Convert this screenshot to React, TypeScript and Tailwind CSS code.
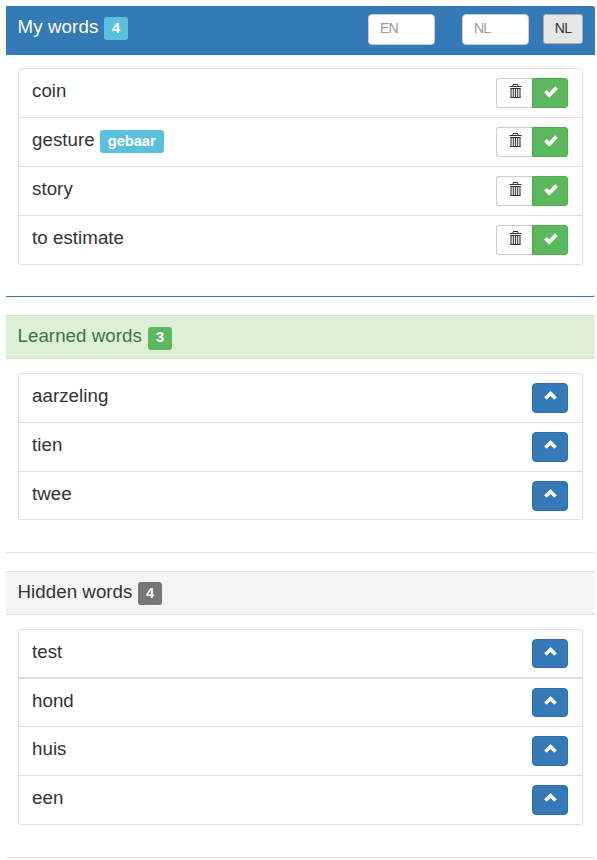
import React from "react";

const FONT = "font-['Liberation_Sans',Arial,sans-serif]";

function TrashIcon() {
  return (
    <svg width="13" height="14" viewBox="0 0 13 14" className="block shrink-0" fill="#333">
      <path d="M4 0h5v1H4zM3.5 1h1v1h-1zM8.5 1h1v1h-1zM.5 2h12v1H.5z" />
      <path d="M1.5 4h10v10h-10z" fill="#e4e6f2" />
      <path d="M1.5 4h10v1h-10zM1.5 13h10v1h-10z" />
      <path d="M1.5 4h1v10h-1zM10.5 4h1v10h-1z" />
      <path d="M3.9 5h.9v8h-.9zM6.05 5h.9v8h-.9zM8.2 5h.9v8h-.9z" />
    </svg>
  );
}

function CheckIcon() {
  return (
    <svg width="14" height="12" viewBox="0 0 14 12" className="block shrink-0" fill="#fff">
      <path d="M11.2.6 13.6 3 5.2 11.4.5 6.6 2.7 4.3l2.5 2.4z" stroke="#fff" strokeWidth=".6" strokeLinejoin="round" />
    </svg>
  );
}

function ChevronUpIcon() {
  return (
    <svg width="13" height="9" viewBox="0 0 13 9" className="block shrink-0" fill="#fff">
      <path d="M6.5.1 12.8 6.2 10.3 8.8 6.5 5.1 2.7 8.8.2 6.2z" />
    </svg>
  );
}

function Badge({ color, children }: { color: string; children: React.ReactNode }) {
  return (
    <span
      className={`flex h-[23px] min-w-6 items-center justify-center rounded-[3px] px-2 text-[14.6px] font-bold leading-none text-white ${color}`}
    >
      {children}
    </span>
  );
}

function WordRow({
  word,
  hint,
  learning,
  height = "h-[49px]",
  buttonHeight = "h-[30px]",
}: {
  word: string;
  hint?: string;
  learning?: boolean;
  height?: string;
  buttonHeight?: string;
}) {
  return (
    <li className={`flex shrink-0 items-start justify-between border-b border-[#ddd] pl-[13px] pr-[14px] pt-[9px] last:rounded-b last:border-b-0 ${height}`}>
      <div className="flex gap-[5px]">
        <span className="pt-[3px] text-[18.7px] leading-5 tracking-[0.06px]">{word}</span>
        {hint && (
          <div className="pt-[3px]">
            <Badge color="bg-[#5bc0de]">{hint}</Badge>
          </div>
        )}
      </div>
      {learning ? (
        <div className="flex">
          <button className="flex h-[30px] w-[36px] justify-center rounded-l-[3px] border border-r-0 border-[#ccc] bg-white pl-[2px] pt-[5px]">
            <TrashIcon />
          </button>
          <button className="flex h-[30px] w-[36px] justify-center rounded-r-[3px] border border-[#4cae4c] bg-[#5cb85c] pl-px pt-[7px]">
            <CheckIcon />
          </button>
        </div>
      ) : (
        <button className={`flex w-[36px] justify-center rounded-[4px] border border-[#2e6da4] bg-[#337ab7] pt-[7px] ${buttonHeight}`}>
          <ChevronUpIcon />
        </button>
      )}
    </li>
  );
}

function WordList({ children }: { children: React.ReactNode }) {
  return <ul className="ml-3 mr-3 flex flex-col rounded-[3px] border border-[#ddd]">{children}</ul>;
}

export default function App() {
  return (
    <main className={`h-[860px] w-[597px] overflow-hidden bg-white pl-[6px] pr-[2px] pt-[6px] text-[#333] ${FONT}`}>
      <section className="h-[291px] rounded-r-[2px] border-b border-[#337ab7]">
        <header className="flex h-[49px] items-start rounded-tr-[2px] bg-[#337ab7] pl-[11.5px] pr-[12px] text-white">
          <h2 className="w-[86.5px] whitespace-nowrap pt-[11px] text-[18.7px] leading-5 tracking-[0.12px]">My words</h2>
          <div className="mt-[11px]">
            <Badge color="bg-[#5bc0de]">4</Badge>
          </div>
          <div className="ml-auto mt-2 flex">
            <input
              placeholder="EN"
              className="h-[31px] w-[67px] rounded-[4px] border border-[#ccc] bg-white px-[11px] pb-[3px] text-[14px] tracking-[-0.8px] placeholder:text-[#999]"
            />
            <input
              placeholder="NL"
              className="ml-[27px] h-[31px] w-[67px] rounded-[4px] border border-[#ccc] bg-white px-[11px] pb-[3px] text-[14px] tracking-[-0.8px] placeholder:text-[#999]"
            />
            <button className="ml-[14px] h-[30px] w-[40px] rounded-[3px] border border-[#adadad] bg-[#e6e6e6] pb-[2px] text-[14px] leading-none tracking-[-0.8px] text-[#333]">
              NL
            </button>
          </div>
        </header>
        <div className="pt-[13px]">
          <WordList>
            <WordRow word="coin" learning />
            <WordRow word="gesture" hint="gebaar" learning />
            <WordRow word="story" learning />
            <WordRow word="to estimate" learning height="h-[48px]" />
          </WordList>
        </div>
      </section>

      <section className="mt-[18px] h-[238px] rounded-r-[2px] border-b border-[#d6e9c6]">
        <header className="flex h-[44px] items-start border-y border-[#d6e9c6] bg-[#dff0d8] pl-[11.5px] text-[#3c763d]">
          <h2 className="w-[130.5px] whitespace-nowrap pt-[10px] text-[18.7px] leading-5 tracking-[0.06px]">Learned words</h2>
          <div className="mt-[11px]">
            <Badge color="bg-[#5cb85c] pb-[2px]">3</Badge>
          </div>
        </header>
        <div className="pt-[14px]">
          <WordList>
            <WordRow word="aarzeling" />
            <WordRow word="tien" />
            <WordRow word="twee" height="h-[47px]" />
          </WordList>
        </div>
      </section>

      <section className="mt-[18px] h-[287px] rounded-r-[2px] border-b border-[#ddd]">
        <header className="flex h-[44px] items-start border-y border-[#ddd] bg-[#f5f5f5] pl-[11.5px]">
          <h2 className="w-[120.5px] whitespace-nowrap pt-[10px] text-[18.7px] leading-5 tracking-[0.06px]">Hidden words</h2>
          <div className="mt-[10px]">
            <Badge color="bg-[#777]">4</Badge>
          </div>
        </header>
        <div className="pt-[14px]">
          <WordList>
            <WordRow word="test" height="h-[49px] border-b-2" buttonHeight="h-[29px]" />
            <WordRow word="hond" height="h-[48px]" buttonHeight="h-[29px]" />
            <WordRow word="huis" />
            <WordRow word="een" height="h-[48px]" />
          </WordList>
        </div>
      </section>
    </main>
  );
}
